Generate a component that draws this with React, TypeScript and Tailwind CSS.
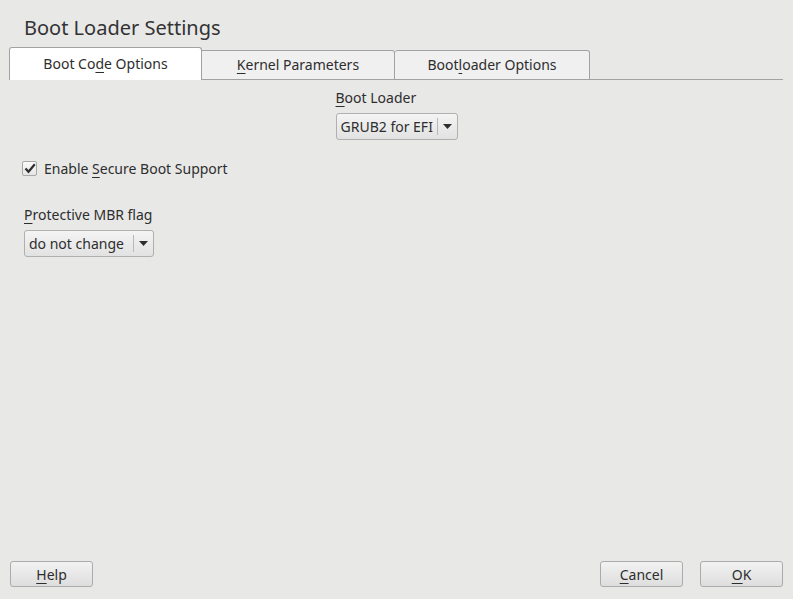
function U({ children }: { children: string }) {
  return <span className="underline underline-offset-[3px] decoration-1">{children}</span>;
}

function Arrow() {
  return (
    <svg width="9" height="5" viewBox="0 0 9 5" className="block">
      <path d="M0 0 L9 0 L4.5 5 Z" fill="#2e2e2e" />
    </svg>
  );
}

function Combo({ value, w, textW }: { value: string; w: string; textW: string }) {
  return (
    <div
      className={`${w} h-[27px] flex items-center rounded-[3px] border border-[#b0b0b0] bg-gradient-to-b from-[#f4f4f4] to-[#e2e2e2] text-[14px] text-[#2e2e2e]`}
    >
      <span className={`${textW} pl-[4px] whitespace-nowrap`}>{value}</span>
      <div className="h-[17px] border-l border-[#b8b8b8]" />
      <div className="flex-1 flex justify-center">
        <Arrow />
      </div>
    </div>
  );
}

function Button({ children }: { children: React.ReactNode }) {
  return (
    <button className="w-[83px] h-[26px] rounded-[3px] border border-[#ababab] bg-gradient-to-b from-[#f2f2f2] to-[#dedede] text-[14px] text-[#2e2e2e] flex items-center justify-center">
      {children}
    </button>
  );
}

export default function App() {
  return (
    <div
      className="w-[793px] h-[599px] bg-[#e8e8e7] flex flex-col text-[#2e2e2e]"
      style={{ fontFamily: '"Noto Sans", "DejaVu Sans", sans-serif' }}
    >
      <h1 className="pl-[24px] pt-[15px] text-[20px] leading-[26px] text-[#333]">Boot Loader Settings</h1>

      <div className="mt-[6px] ml-[9px] mr-[10px] flex items-end border-b border-[#a2a2a2] h-[33px]">
        <div className="w-[193px] h-[33px] -mb-px bg-white border border-b-0 border-[#a2a2a2] rounded-t-[3px] flex items-center justify-center text-[14px] pb-[2px]">
          Boot Co<U>d</U>e Options
        </div>
        <div className="w-[193px] h-[30px] bg-[#f0f0f0] border-y border-r border-[#a2a2a2] rounded-tr-[3px] flex items-center justify-center text-[14px] pb-[2px] -mb-px">
          <U>K</U>ernel Parameters
        </div>
        <div className="w-[195px] h-[30px] bg-[#f0f0f0] border-y border-r border-[#a2a2a2] rounded-t-[3px] flex items-center justify-center text-[14px] pb-[2px] -mb-px">
          Boot<U>l</U>oader Options
        </div>
      </div>

      <div className="flex flex-col items-center mt-[9px]">
        <div className="w-[122px] text-[14px] leading-[18px]">
          <U>B</U>oot Loader
        </div>
        <div className="mt-[6px]">
          <Combo value="GRUB2 for EFI" w="w-[122px]" textW="w-[100px]" />
        </div>
      </div>

      <label className="flex items-center mt-[18px] ml-[22px] gap-[7px] text-[14px]">
        <span className="w-[15px] h-[15px] rounded-[2px] border border-[#a8a8a8] bg-gradient-to-b from-[#fafafa] to-[#e6e6e6] flex items-center justify-center">
          <svg width="12" height="11" viewBox="0 0 12 11">
            <path d="M1.5 5.5 L4.5 8.8 L10.8 1.2" fill="none" stroke="#2e2e2e" strokeWidth="2.2" />
          </svg>
        </span>
        <span>
          Enable <U>S</U>ecure Boot Support
        </span>
      </label>

      <div className="ml-[24px] mt-[27px] text-[14px] leading-[18px]">
        <U>P</U>rotective MBR flag
      </div>
      <div className="ml-[24px] mt-[6px]">
        <Combo value="do not change" w="w-[130px]" textW="w-[108px]" />
      </div>

      <div className="flex-1" />

      <div className="flex items-center px-[10px] pb-[12px]">
        <Button>
          <U>H</U>elp
        </Button>
        <div className="flex-1" />
        <Button>
          <U>C</U>ancel
        </Button>
        <div className="w-[17px]" />
        <Button>
          <U>O</U>K
        </Button>
      </div>
    </div>
  );
}
